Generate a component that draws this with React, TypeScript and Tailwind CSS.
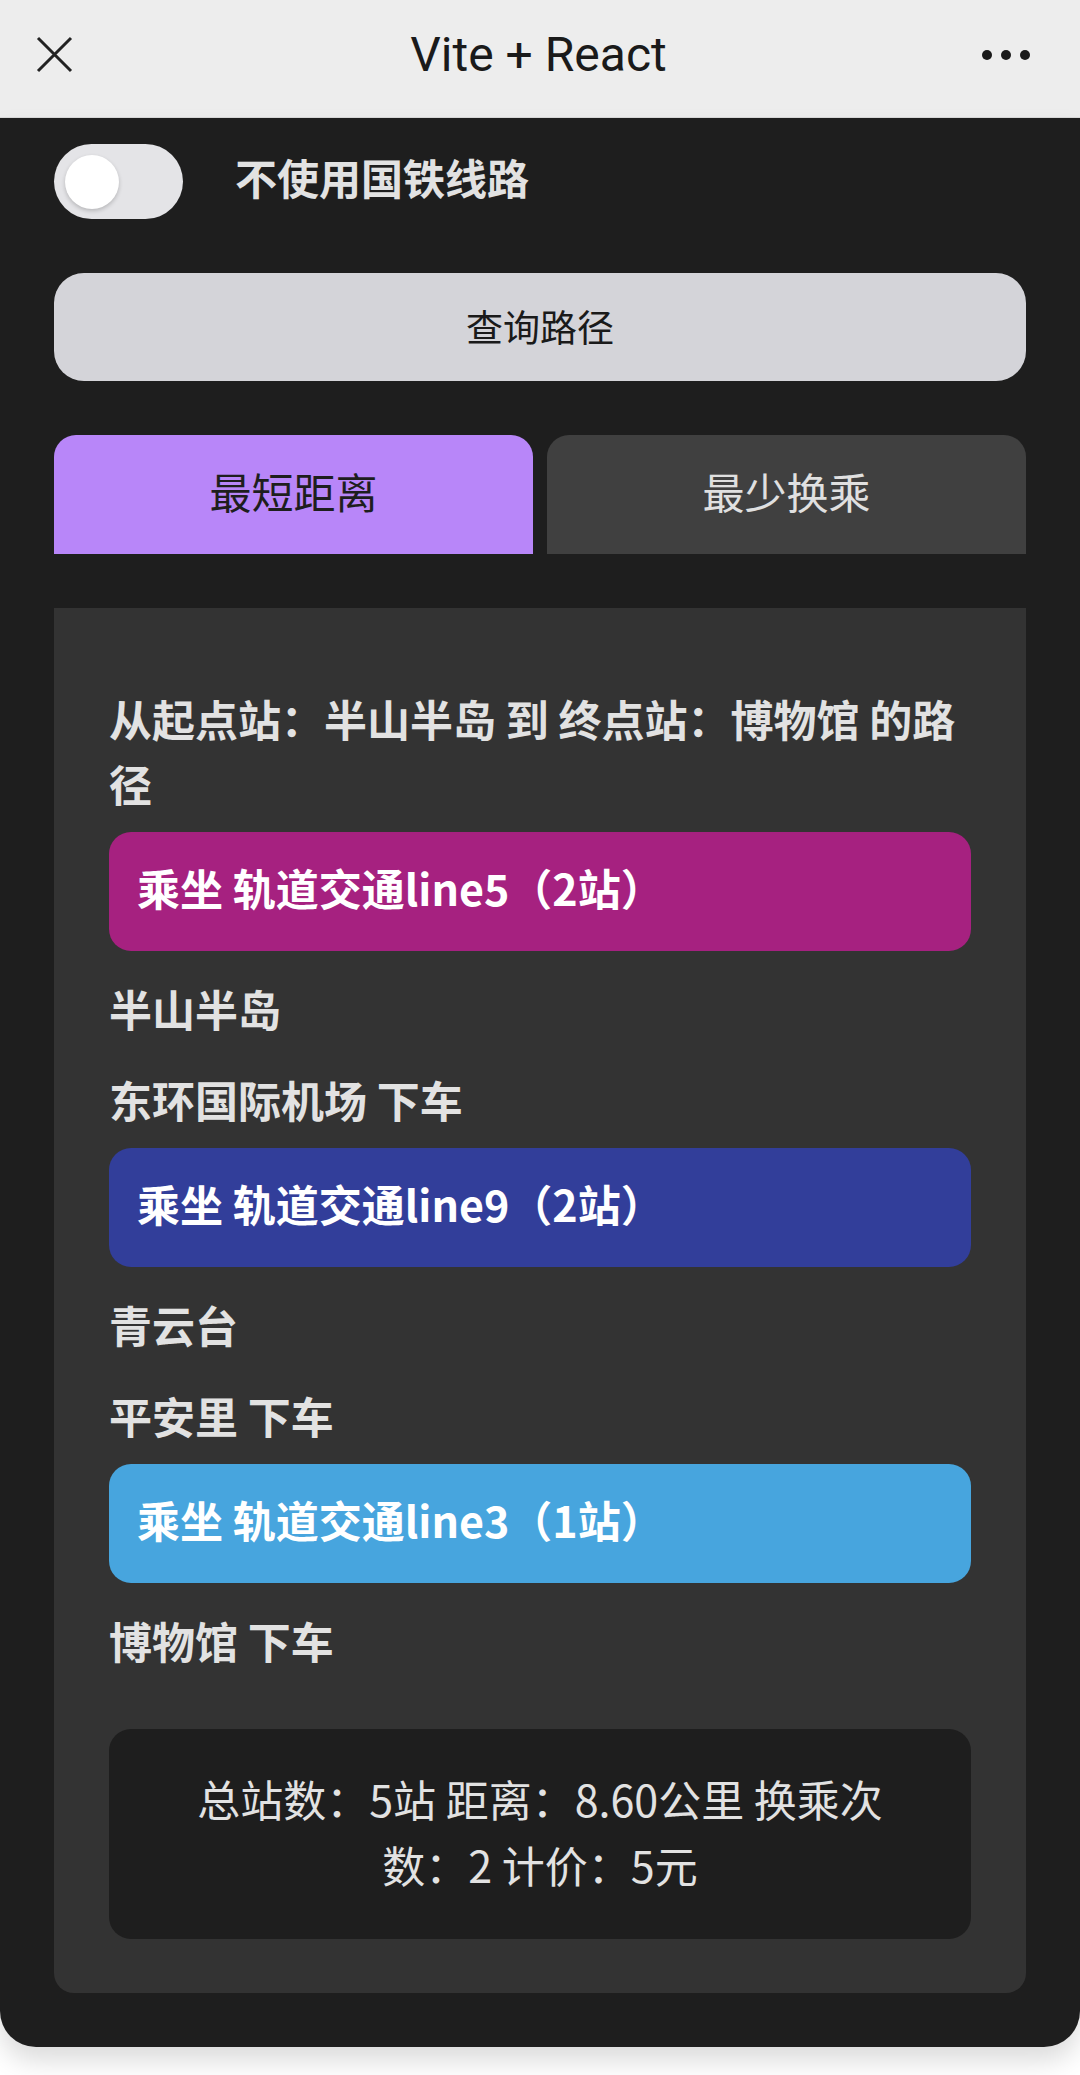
import { useState } from "react";

type Segment = {
  line: string;
  count: number;
  color: string;
  stations: string[];
};

const segments: Segment[] = [
  { line: "轨道交通line5", count: 2, color: "bg-[#a62180]", stations: ["半山半岛", "东环国际机场 下车"] },
  { line: "轨道交通line9", count: 2, color: "bg-[#323e9a]", stations: ["青云台", "平安里 下车"] },
  { line: "轨道交通line3", count: 1, color: "bg-[#47a5de]", stations: ["博物馆 下车"] },
];

export default function App() {
  const [noRail, setNoRail] = useState(false);
  const [tab, setTab] = useState<"dist" | "transfer">("dist");

  return (
    <div className="min-h-[2075px] bg-white font-['Noto_Sans_CJK_SC','Noto_Sans',sans-serif]">
      {/* top bar */}
      <header className="h-[118px] bg-[#ededed] border-b border-[#dadada] flex items-center justify-between pl-[36px] pr-[50px] pb-[8px]">
        <svg width="37" height="37" viewBox="0 0 37 37" className="text-[#222]">
          <path d="M2 2 L35 35 M35 2 L2 35" stroke="currentColor" strokeWidth="3" />
        </svg>
        <h1 className="font-['Roboto',sans-serif] text-[48px] text-[#1a1a1a] leading-none ml-[22px]">Vite + React</h1>
        <div className="flex gap-[9px]">
          <span className="w-[10px] h-[10px] rounded-full bg-[#1a1a1a]"></span>
          <span className="w-[10px] h-[10px] rounded-full bg-[#1a1a1a]"></span>
          <span className="w-[10px] h-[10px] rounded-full bg-[#1a1a1a]"></span>
        </div>
      </header>

      <main className="bg-[#1e1e1e] rounded-b-[36px] shadow-[0_14px_26px_rgba(0,0,0,0.14)] px-[54px] pt-[26px] pb-[54px]">
        {/* switch */}
        <div className="flex items-center gap-[52px] h-[75px]">
          <button
            onClick={() => setNoRail(!noRail)}
            className={`relative w-[129px] h-[75px] rounded-full ${noRail ? "bg-[#b886f9]" : "bg-[#e4e4e7]"}`}
          >
            <span
              className={`absolute top-[11px] w-[54px] h-[54px] rounded-full bg-white shadow-[0_2px_4px_rgba(0,0,0,0.2)] ${noRail ? "left-[64px]" : "left-[11px]"}`}
            ></span>
          </button>
          <span className="mb-[10px] text-[42px] font-bold text-[#e2e2e2]">不使用国铁线路</span>
        </div>

        <button className="mt-[54px] w-full h-[108px] rounded-[30px] bg-[#d4d4d9] text-[37px] text-[#1a1a1a]">
          查询路径
        </button>

        {/* tabs */}
        <div className="mt-[54px] grid grid-cols-2 gap-[14px] h-[119px]">
          <button
            onClick={() => setTab("dist")}
            className={`rounded-t-[22px] pb-[8px] text-[42px] ${tab === "dist" ? "bg-[#b886f9] text-[#1e1e1e]" : "bg-[#404040] text-[#e0e0e0]"}`}
          >
            最短距离
          </button>
          <button
            onClick={() => setTab("transfer")}
            className={`rounded-t-[22px] pb-[8px] text-[42px] ${tab === "transfer" ? "bg-[#b886f9] text-[#1e1e1e]" : "bg-[#404040] text-[#e0e0e0]"}`}
          >
            最少换乘
          </button>
        </div>

        {/* result */}
        <section className="mt-[54px] bg-[#333333] rounded-b-[20px] px-[55px] pt-[78px] pb-[54px]">
          <h2 className="text-[43px] leading-[65px] font-bold text-[#e2e2e2]">
            从起点站：半山半岛 到 终点站：博物馆 的路径
          </h2>

          {segments.map((s) => (
            <div key={s.line}>
              <div className={`mt-[16px] h-[119px] rounded-[22px] ${s.color} flex items-center px-[28px] pb-[8px] text-[43px] font-bold text-white`}>
                乘坐 {s.line}（{s.count}站）
              </div>
              {s.stations.map((st, i) => (
                <p
                  key={st}
                  className={`${i === 0 ? "mt-[25px]" : "mt-[26px]"} text-[43px] leading-[65px] font-bold text-[#e2e2e2]`}
                >
                  {st}
                </p>
              ))}
            </div>
          ))}

          <div className="mt-[56px] rounded-[22px] bg-[#1e1e1e] px-[60px] pt-[36px] pb-[42px] text-center text-[43px] leading-[66px] text-[#e2e2e2]">
            总站数：5站 距离：8.60公里 换乘次数：2 计价：5元
          </div>
        </section>
      </main>
    </div>
  );
}
